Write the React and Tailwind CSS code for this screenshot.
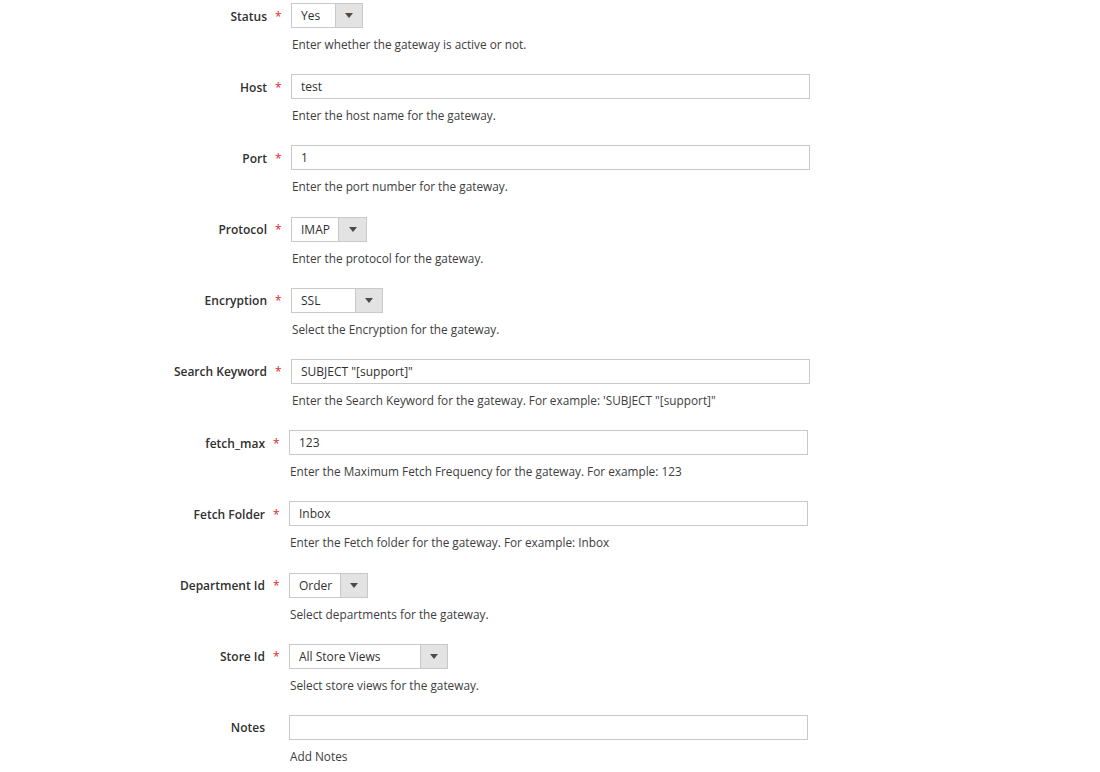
import React from "react";

const rows = [
  { label: "Status", type: "select", value: "Yes", width: 72, arrow: 27, hint: "Enter whether the gateway is active or not.", shift: 0 },
  { label: "Host", type: "text", value: "test", hint: "Enter the host name for the gateway.", shift: 0 },
  { label: "Port", type: "text", value: "1", hint: "Enter the port number for the gateway.", shift: 0 },
  { label: "Protocol", type: "select", value: "IMAP", width: 76, arrow: 28, hint: "Enter the protocol for the gateway.", shift: 0 },
  { label: "Encryption", type: "select", value: "SSL", width: 92, arrow: 27, hint: "Select the Encryption for the gateway.", shift: 0 },
  { label: "Search Keyword", type: "text", value: 'SUBJECT "[support]"', hint: "Enter the Search Keyword for the gateway. For example: 'SUBJECT \"[support]\"", shift: 0 },
  { label: "fetch_max", type: "text", value: "123", hint: "Enter the Maximum Fetch Frequency for the gateway. For example: 123", shift: 2 },
  { label: "Fetch Folder", type: "text", value: "Inbox", hint: "Enter the Fetch folder for the gateway. For example: Inbox", shift: 2 },
  { label: "Department Id", type: "select", value: "Order", width: 79, arrow: 27, hint: "Select departments for the gateway.", shift: 2 },
  { label: "Store Id", type: "select", value: "All Store Views", width: 159, arrow: 27, hint: "Select store views for the gateway.", shift: 2 },
  { label: "Notes", type: "text", value: "", hint: "Add Notes", shift: 2, optional: true },
];

const Arrow = () => (
  <svg width="8" height="5" viewBox="0 0 8 5">
    <path d="M0 0h8L4 5z" fill="#514943" />
  </svg>
);

const Field = ({ row }) => {
  if (row.type === "select") {
    return (
      <div
        className="flex h-[25px] border border-[#c9c9c9] bg-white"
        style={{ width: row.width }}
      >
        <div className="flex flex-1 items-center pl-[9px] pt-[1px] text-[12px] text-[#303030]">
          {row.value}
        </div>
        <div
          className="flex items-center justify-center border-l border-[#c9c9c9] bg-[#e3e3e3]"
          style={{ width: row.arrow }}
        >
          <Arrow />
        </div>
      </div>
    );
  }
  return (
    <div className="flex h-[25px] w-[519px] items-center border border-[#c9c9c9] bg-white pl-[9px] pt-[1px] text-[12px] text-[#303030]">
      {row.value}
    </div>
  );
};

const Row = ({ row }) => (
  <div className="flex h-[71.2px]">
    <div
      className="flex h-[26px] items-center justify-end pt-[1px]"
      style={{ width: 291 - row.shift }}
    >
      <span className="text-[12px] font-semibold text-[#303030]">{row.label}</span>
      <span className={`ml-[8px] mr-[10px] w-[6px] text-[12px] text-[#e22626] ${row.optional ? "invisible" : ""}`}>
        *
      </span>
    </div>
    <div className="flex flex-col">
      <Field row={row} />
      <p className="mt-[7px] pl-[1px] text-[11.8px] leading-[18px] text-[#3d3d3d]">{row.hint}</p>
    </div>
  </div>
);

export default function App() {
  return (
    <div
      className="min-h-[772px] w-[1100px] bg-white pt-[3px]"
      style={{ fontFamily: '"Open Sans", "Noto Sans", sans-serif' }}
    >
      {rows.map((row) => (
        <Row key={row.label} row={row} />
      ))}
    </div>
  );
}
